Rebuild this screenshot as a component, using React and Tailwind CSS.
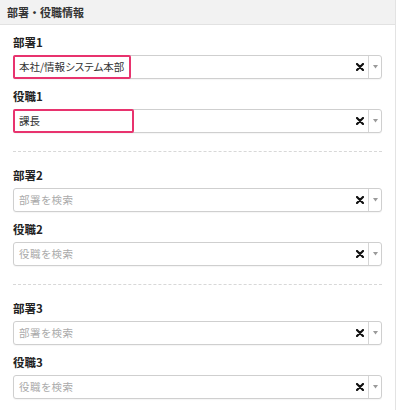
import React from 'react'

const groups = [
  [
    { label: '部署1', value: '本社/情報システム本部', placeholder: '部署を検索', mark: 'w-[118px]' },
    { label: '役職1', value: '課長', placeholder: '役職を検索', mark: 'w-[121px]' },
  ],
  [
    { label: '部署2', value: '', placeholder: '部署を検索' },
    { label: '役職2', value: '', placeholder: '役職を検索' },
  ],
  [
    { label: '部署3', value: '', placeholder: '部署を検索' },
    { label: '役職3', value: '', placeholder: '役職を検索' },
  ],
]

function SelectBox({ value, placeholder, mark }) {
  return (
    <div className="relative">
      <div className="flex h-[24px] items-stretch rounded-[3px] border border-[#cfcfcf] bg-white shadow-[0_1px_1px_rgba(0,0,0,0.04)]">
        <div className="flex flex-1 items-center pl-[5px] [font-feature-settings:'palt']">
          {value ? (
            <span className="text-[10.5px] text-[#333]">{value}</span>
          ) : (
            <span className="text-[10.5px] tracking-[0.6px] text-[#aaa]">{placeholder}</span>
          )}
        </div>
        <div className="flex w-[16px] items-center justify-center">
          <svg width="8" height="8" viewBox="0 0 8 8">
            <path d="M1 1 L7 7 M7 1 L1 7" stroke="#111" strokeWidth="2.2" strokeLinecap="round" />
          </svg>
        </div>
        <div className="flex w-[13px] items-center justify-center border-l border-[#d6d6d6]">
          <svg width="5" height="4" viewBox="0 0 5 4">
            <path d="M0 0 L5 0 L2.5 3.5 Z" fill="#9a9a9a" />
          </svg>
        </div>
      </div>
      {mark && (
        <div className={`absolute left-0 top-0 h-[24px] rounded-[2px] border-2 border-[#e8336e] ${mark}`} />
      )}
    </div>
  )
}

export default function App() {
  return (
    <div className="h-[410px] w-[400px] bg-white font-['Noto_Sans_CJK_JP',sans-serif]">
      <div className="h-full w-[396px] border-r border-[#e3e3e3]">
        <div className="flex h-[25px] items-center border-b border-[#e2e2e2] bg-[#f2f2f2] pl-[7px]">
          <span className="text-[11px] font-bold text-[#333]">部署・役職情報</span>
        </div>

        {groups.map((fields, gi) => (
          <div key={gi} className={`px-[13px] ${gi === 0 ? 'pt-[9px]' : 'pt-[15px]'}`}>
            <div className="flex flex-col gap-[9px]">
              {fields.map((f) => (
                <div key={f.label}>
                  <div className="mb-[4px] h-[17px] text-[11.5px] font-bold leading-[17px] text-[#222]">
                    {f.label}
                  </div>
                  <SelectBox value={f.value} placeholder={f.placeholder} mark={f.mark} />
                </div>
              ))}
            </div>
            {gi < groups.length - 1 && (
              <div className="mt-[18px] border-b border-dashed border-[#d8d8d8]" />
            )}
          </div>
        ))}
      </div>
    </div>
  )
}
